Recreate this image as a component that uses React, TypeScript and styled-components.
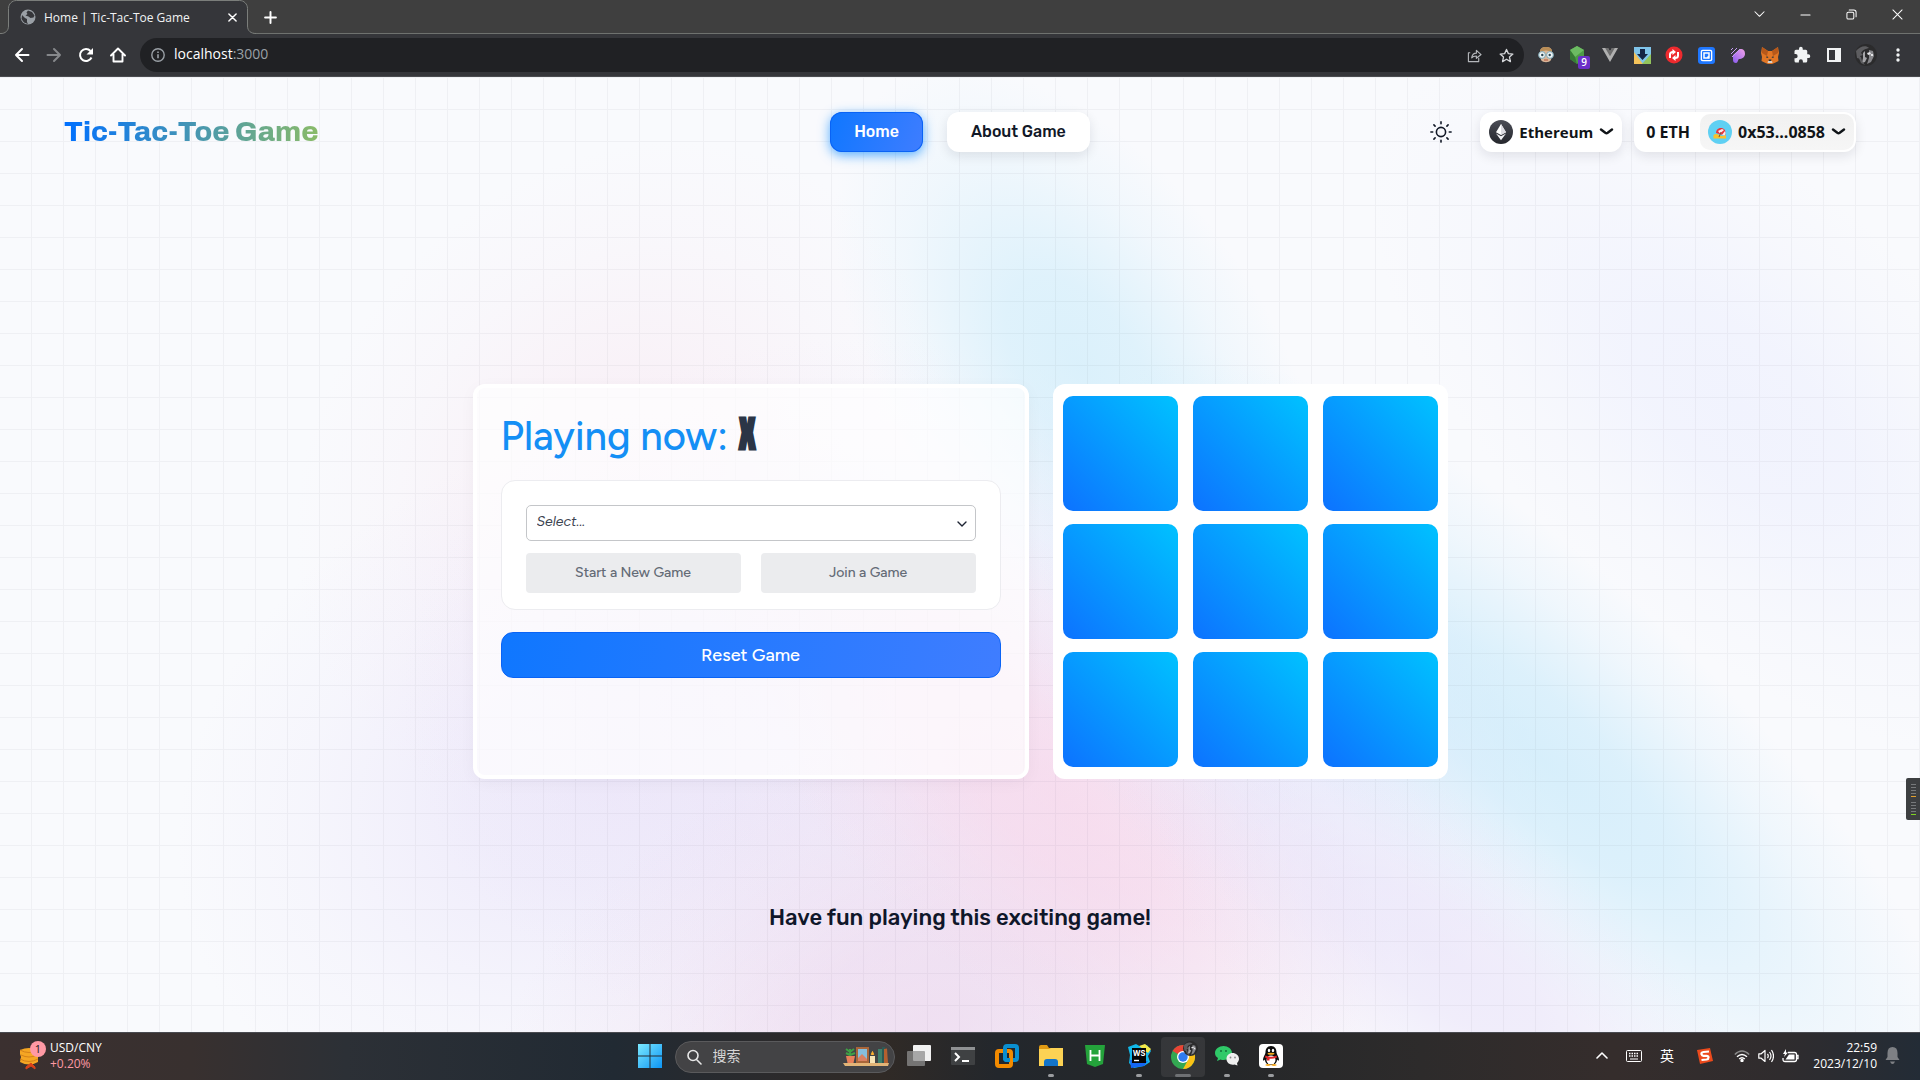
import React from 'react';
import styled, { createGlobalStyle, css } from 'styled-components';

const ui = '"Segoe UI", "Open Sans", "Noto Sans", "Noto Sans CJK SC", sans-serif';
const rubik = 'Rubik, Roboto, "Liberation Sans", sans-serif';
const rounded = 'Figtree, Lato, "Liberation Sans", sans-serif';

const GlobalStyle = createGlobalStyle`
  *, *::before, *::after { box-sizing: border-box; }
  body { margin: 0; font-family: ${rubik}; color: #0f172a; }
  button, select, input { font: inherit; color: inherit; }
  button { border: 0; padding: 0; background: none; cursor: pointer; }
  svg { display: block; flex: none; }
`;

const Screen = styled.div`
  display: flex;
  flex-direction: column;
  min-height: 100vh;
`;

/* ---------- browser chrome ---------- */

const TabStrip = styled.div`
  display: flex;
  height: 34px;
  background: #3f3f3f;
  box-shadow: inset 0 -1px 0 #6f726f;
  font-family: ${ui};
`;

const Tab = styled.div`
  position: relative;
  display: flex;
  align-items: center;
  gap: 8px;
  width: 256px;
  padding: 0 17px 0 20px;
  color: #f1f3f4;
  font-size: 12px;
`;

const TabShape = styled.svg`
  position: absolute;
  left: 0;
  top: 0;
`;

const TabTitle = styled.span`
  position: relative;
  flex: 1;
  white-space: nowrap;
`;

const TabIcon = styled.span`
  position: relative;
  display: flex;
`;

const TabClose = styled.button`
  position: relative;
  display: grid;
  place-items: center;
  width: 14px;
  height: 16px;
`;

const NewTab = styled.button`
  display: grid;
  place-items: center;
  width: 28px;
  margin-right: auto;
`;

const WindowButton = styled.button`
  display: grid;
  place-items: center;
  width: 46px;
  height: 28px;
`;

const Toolbar = styled.div`
  display: flex;
  align-items: center;
  height: 43px;
  padding: 0 6px;
  background: #35363a;
  border-bottom: 1px solid #4a4b4f;
  font-family: ${ui};
`;

const ToolSlot = styled.button`
  position: relative;
  display: grid;
  place-items: center;
  width: 32px;
  height: 32px;
`;

const Omnibox = styled.div`
  display: flex;
  align-items: center;
  flex: 1;
  height: 34px;
  margin: 0 6px;
  padding: 0 2px 0 11px;
  border-radius: 17px;
  background: #202124;
`;

const Address = styled.div`
  flex: 1;
  margin-left: 9px;
  color: #9aa0a6;
  font-size: 14px;
  line-height: 20px;
  padding-bottom: 2px;
  b { color: #fff; font-weight: 400; }
`;

const CountBadge = styled.span`
  position: absolute;
  left: 16px;
  top: 17px;
  width: 12px;
  height: 13px;
  border-radius: 2px;
  background: #6b2fc9;
  color: #fff;
  font-size: 10px;
  font-weight: 600;
  line-height: 13px;
  text-align: center;
`;

/* ---------- page ---------- */

const Page = styled.div`
  position: relative;
  display: flex;
  flex-direction: column;
  flex: 1;
  overflow: hidden;
  background: #f9fafd;
`;

const Backdrop = styled.svg`
  position: absolute;
  inset: 0;
  width: 100%;
  height: 100%;
`;

const Header = styled.header`
  position: relative;
  display: grid;
  grid-template-columns: 1fr auto 1fr;
  align-items: center;
  padding: 35px 64px;
`;

const Brand = styled.a`
  justify-self: start;
  background: linear-gradient(90deg, #0070ff, #8abb68);
  background-clip: text;
  -webkit-background-clip: text;
  color: transparent;
  font-family: Archivo, Inter, sans-serif;
  font-size: 28px;
  font-weight: 800;
  line-height: 40px;
  text-decoration: none;
`;

const Nav = styled.nav`
  display: flex;
  gap: 24px;
`;

const NavLink = styled.a<{ $active?: boolean }>`
  height: 40px;
  padding: 0 24px;
  border-radius: 12px;
  font-size: 16px;
  font-weight: 500;
  line-height: 39px;
  text-decoration: none;
  ${({ $active }) =>
    $active
      ? css`
          background: linear-gradient(110deg, #0f77ff, #3f7dff);
          color: #fff;
          box-shadow: inset 0 0 0 1px #0a63f5, 0 3px 12px rgba(14, 140, 255, 0.7);
        `
      : css`
          background: #fff;
          color: #111827;
          box-shadow: 0 4px 12px rgba(15, 23, 42, 0.1);
        `}
`;

const Tools = styled.div`
  display: flex;
  align-items: center;
  justify-self: end;
  gap: 12px;
  font-family: ${ui};
  font-weight: 700;
  color: #101418;
`;

const ThemeToggle = styled.button`
  margin-right: 16px;
`;

const ChainButton = styled.button`
  display: flex;
  align-items: center;
  gap: 6px;
  height: 40px;
  padding: 0 8px 0 9px;
  border-radius: 12px;
  background: #fff;
  box-shadow: 0 4px 12px rgba(15, 23, 42, 0.1);
  font-size: 15px;
`;

const Wallet = styled.div`
  display: flex;
  align-items: center;
  height: 40px;
  padding: 2px 2px 2px 12px;
  border-radius: 12px;
  background: #fff;
  box-shadow: 0 4px 12px rgba(15, 23, 42, 0.1);
  font-size: 16px;
`;

const AccountButton = styled.button`
  display: flex;
  align-items: center;
  gap: 6px;
  height: 36px;
  margin-left: 10px;
  padding: 0 8px;
  border-radius: 10px;
  background: linear-gradient(#f1f1f1, #f6f6f6);
`;

const Stage = styled.main`
  position: relative;
  display: flex;
  flex: 1;
  flex-direction: column;
  align-items: center;
  justify-content: center;
  gap: 124px;
  padding-top: 98px;
`;

const Columns = styled.div`
  display: flex;
  gap: 24px;
`;

const Panel = styled.section`
  width: 556px;
  padding: 24px;
  border: 4px solid #fff;
  border-radius: 12px;
  background: rgba(255, 255, 255, 0.7);
  box-shadow: 0 4px 16px rgba(15, 23, 42, 0.04);
  font-family: ${rounded};
`;

const Turn = styled.h1`
  display: flex;
  align-items: baseline;
  gap: 10px;
  height: 44px;
  margin: 0 0 24px;
  color: #148ff5;
  font-size: 40px;
  font-weight: 500;
  line-height: 44px;
`;

const Mark = styled.span`
  color: #2b3546;
  font-family: Anton, "Liberation Sans Narrow", "Open Sans", sans-serif;
  font-size: 38px;
  font-weight: 700;
`;

const Setup = styled.div`
  display: grid;
  grid-template-columns: 1fr 1fr;
  gap: 12px 20px;
  padding: 24px 24px 16px;
  border: 1px solid #ececf0;
  border-radius: 14px;
  background: #fff;
`;

const Field = styled.label`
  display: grid;
  grid-column: 1 / -1;
  align-items: center;
  > * { grid-area: 1 / 1; }
  svg { justify-self: end; margin: 4px 9px 0 0; pointer-events: none; }
`;

const Picker = styled.select`
  appearance: none;
  width: 100%;
  height: 36px;
  padding: 0 12px 4px 10px;
  border: 1px solid #c4c6c9;
  border-radius: 5px;
  background: #fff;
  color: #3c4350;
  font-size: 14px;
  font-style: italic;
`;

const SoftButton = styled.button`
  height: 40px;
  padding-bottom: 2px;
  border-radius: 4px;
  background: #ebecee;
  color: #646b76;
  font-size: 14px;
  font-weight: 500;
`;

const ResetButton = styled.button`
  width: 100%;
  height: 46px;
  margin-top: 22px;
  border: 1px solid #0a63f5;
  border-radius: 12px;
  background: linear-gradient(100deg, #0f77ff, #3f7dff);
  color: #fff;
  font-size: 18px;
  font-weight: 500;
`;

const Board = styled.section`
  display: grid;
  grid-template-columns: repeat(3, 115px);
  grid-auto-rows: 115px;
  gap: 13px 15px;
  padding: 12px 10px;
  border-radius: 12px;
  background: #fff;
`;

const Cell = styled.button`
  border-radius: 10px;
  background: linear-gradient(45deg, #0d72ff, #00c2ff);
`;

const Tagline = styled.p`
  margin: 0;
  font-size: 22px;
  font-weight: 500;
  line-height: 30px;
`;

const SideMeter = styled.div`
  position: absolute;
  right: 0;
  top: 701px;
  display: grid;
  place-items: center;
  width: 14px;
  height: 42px;
  border-radius: 2px 0 0 2px;
  background: #3d3f41;
`;

/* ---------- taskbar ---------- */

const Taskbar = styled.footer`
  display: grid;
  grid-template-columns: 1fr auto 1fr;
  align-items: center;
  height: 48px;
  border-top: 1px solid #494a50;
  background: linear-gradient(90deg, #3b3030, #38302f 10%, #2c3036 18%, #212a33 32%, #2b2a2c 40%, #302a26 46%, #23272c 52%, #252729 64%, #2d2b2b 74%, #352d2c 84%, #2f2c2e 93%, #232c36);
  color: #fff;
  font-family: ${ui};
  font-size: 12px;
  line-height: 16px;
`;

const Ticker = styled.button`
  display: flex;
  align-items: center;
  justify-self: start;
  gap: 4px;
  margin-left: 18px;
  padding-bottom: 2px;
  text-align: left;
`;

const Loss = styled.span`
  display: block;
  color: #ff99a4;
`;

const Dock = styled.div`
  display: flex;
  align-items: center;
`;

const DockItem = styled.button<{ $state?: 'running' | 'active' }>`
  position: relative;
  display: grid;
  place-items: center;
  width: 44px;
  height: 40px;
  padding-bottom: 2px;
  border-radius: 4px;
  ${({ $state }) =>
    $state &&
    css`
      ${$state === 'active' && 'background: rgba(255, 255, 255, 0.08);'}
      &::after {
        content: '';
        position: absolute;
        bottom: 0;
        width: ${$state === 'active' ? 16 : 6}px;
        height: 3px;
        border-radius: 2px;
        background: ${$state === 'active' ? '#6f7174' : '#9a9c9f'};
      }
    `}
`;

const Search = styled.label`
  display: flex;
  align-items: center;
  gap: 10px;
  width: 220px;
  height: 32px;
  margin: 0 2px 0 3px;
  padding: 0 5px 0 11px;
  border: 1px solid #5a5a5c;
  border-radius: 16px;
  background: #434345;
`;

const SearchInput = styled.input`
  flex: 1;
  min-width: 0;
  border: 0;
  padding: 0 0 2px;
  background: none;
  outline: 0;
  font-size: 14px;
  &::placeholder { color: #d6d6d6; opacity: 1; }
`;

const Tray = styled.div`
  display: flex;
  align-items: center;
  justify-self: end;
  margin-right: 20px;
  padding-bottom: 2px;
`;

const TraySlot = styled.button<{ $w?: number }>`
  display: grid;
  place-items: center;
  width: ${({ $w = 32 }) => $w}px;
  height: 32px;
  font-size: 14px;
`;

const Clock = styled.div`
  display: flex;
  flex-direction: column;
  align-items: flex-end;
  width: 66px;
  margin: 0 8px 0 5px;
  white-space: nowrap;
`;

/* ---------- drawings ---------- */

const Line = ({ d, size = 16, color = '#fff', w = 2, box = 16 }: { d: string; size?: number; color?: string; w?: number; box?: number }) => (
  <svg width={size} height={size} viewBox={`0 0 ${box} ${box}`} fill="none" stroke={color} strokeWidth={w} strokeLinecap="round" strokeLinejoin="round">
    <path d={d} />
  </svg>
);

const Chevron = () => (
  <svg width="15" height="8" viewBox="0 0 15 8" fill="none" stroke="#101418" strokeWidth="2.4" strokeLinecap="round" strokeLinejoin="round">
    <path d="M2 1.500L6.300 4.800Q7.500 5.600 8.700 4.800L13 1.500" />
  </svg>
);

const Avatar = ({ size }: { size: number }) => (
  <svg width={size} height={size} viewBox="0 0 22 22">
    <circle cx="11" cy="11" r="11" fill="#2b2b2c" />
    <path d="M1 7c4-5 10-6 13-3-3 1-6 1-8 5l2 2-3 1 1 3-4-1z" fill="#5d5d60" />
    <path d="M8 9l2-2v6l2 1-2 4-3 1 1-5z" fill="#a5a5a8" />
    <path d="M14 6l4 1 1 5-3 6-4 2 2-6z" fill="#86868a" />
    <path d="M12 9l3-1 1 2-3 1zM16 10h2v2h-2z" fill="#e4e4e6" />
    <path d="M3 12l3 1 1 4 3 4-4-2z" fill="#5d5d60" />
  </svg>
);

const extensions = [
  {
    name: 'Disguise',
    art: (
      <svg width="18" height="18" viewBox="0 0 18 18">
        <path d="M3 6C3 2 6 1 9 1s6 1 6 5l-1 8c-2 3-8 3-10 0z" fill="#d9b597" />
        <path d="M3 6C3 2 6 1 9 1s6 1 6 5c-4-2-8-2-12 0z" fill="#b98d56" />
        <circle cx="5" cy="9" r="3.4" fill="#eef4f6" stroke="#7ca6b3" />
        <circle cx="13" cy="9" r="3.4" fill="#eef4f6" stroke="#7ca6b3" />
        <circle cx="5.300" cy="9" r="1.200" fill="#2a4550" />
        <circle cx="12.700" cy="9" r="1.200" fill="#2a4550" />
        <path d="M7 14h4" stroke="#b5543c" />
      </svg>
    ),
  },
  {
    name: 'Node tools',
    badge: '9',
    art: (
      <svg width="18" height="20" viewBox="0 0 18 20">
        <path d="M8 1l7 4v9l-7 5-7-5V5z" fill="#4d9b47" />
        <path d="M8 1l7 4-9 7-5-7z" fill="#6cbb62" />
        <path d="M1 5l5 7 2 7-7-5z" fill="#377a35" />
      </svg>
    ),
  },
  {
    name: 'Vue devtools',
    art: (
      <svg width="16" height="14" viewBox="0 0 16 14">
        <path d="M0 0h6l2 3.500L10 0h6L8 14z" fill="#b0b0b0" />
        <path d="M3.200 0H6l2 3.500L10 0h2.800L8 8.300z" fill="#6e6e6e" />
      </svg>
    ),
  },
  {
    name: 'Downloader',
    art: (
      <svg width="17" height="17" viewBox="0 0 17 17">
        <path d="M0 0h17v17H0z" fill="#7fc4ea" />
        <path d="M0 5l9 12H0z" fill="#f4c35a" />
        <path d="M17 7v10H8z" fill="#93c45c" />
        <path d="M6 2h5v5h3l-5.500 6L3 7h3z" fill="#142446" />
      </svg>
    ),
  },
  {
    name: 'Sync',
    art: (
      <svg width="18" height="18" viewBox="0 0 18 18">
        <circle cx="9" cy="9" r="8.500" fill="#ee2a2e" />
        <path d="M5 12V8.500Q5 6 8 6M13 6v3.500Q13 12 10 12" fill="none" stroke="#fff" strokeWidth="2" />
        <path d="M7.500 3l3.500 3-3.500 3zM10.500 9v6L7 12z" fill="#fff" />
      </svg>
    ),
  },
  {
    name: 'Quick search',
    art: (
      <svg width="17" height="17" viewBox="0 0 17 17">
        <rect width="17" height="17" rx="3" fill="#1f77ff" />
        <rect x="2.700" y="2.700" width="11.600" height="11.600" rx="2" fill="#fff" />
        <rect x="4" y="4" width="9" height="9" rx="1" fill="#1f77ff" />
        <path d="M6 6h5v5H6zM9.500 9.500l2 2" fill="none" stroke="#fff" strokeWidth="1.500" />
      </svg>
    ),
  },
  {
    name: 'Phantom view',
    art: (
      <svg width="16" height="17" viewBox="0 0 16 17">
        <defs>
          <linearGradient id="pv" x1="0" y1="1" x2="1" y2="0">
            <stop offset="0" stopColor="#8a5cf0" />
            <stop offset="1" stopColor="#f2a3e8" />
          </linearGradient>
        </defs>
        <path d="M3 8l7-6c4 0 5 2 5 5s-3 5-6 5c-1 0-1 4-3 4s-3-1-3-3z" fill="url(#pv)" />
        <path d="M1 3l2-2M1 7l6-6M2 10l8-8" stroke="#c69cf2" />
      </svg>
    ),
  },
  {
    name: 'MetaMask',
    art: (
      <svg width="18" height="17" viewBox="0 0 18 17">
        <path d="M1 0l6 4h4l6-4 1 6-1 4 .5 4-4 2-2.500 1H7l-2.500-1-4-2 .5-4-1-4z" fill="#e27625" />
        <path d="M1 0l6 4-1 5-5-3zM17 0l-6 4 1 5 5-3z" fill="#b7581a" />
        <path d="M6 9l1.500 2L5 10.500zM12 9l-1.500 2 2.500-.5z" fill="#22333f" />
        <path d="M7 14h4l.5 2h-5z" fill="#d9cfc6" />
        <path d="M7.500 12.500h3L10 14H8z" fill="#22333f" />
      </svg>
    ),
  },
  {
    name: 'Extensions',
    art: (
      <svg width="18" height="18" viewBox="0 0 24 24" fill="#f1f3f4">
        <path d="M20.500 11H19V7a2 2 0 0 0-2-2h-4V3.500a2.500 2.500 0 0 0-5 0V5H4a2 2 0 0 0-2 2v3.800h1.500a2.700 2.700 0 0 1 0 5.400H2V20a2 2 0 0 0 2 2h3.800v-1.500a2.700 2.700 0 0 1 5.400 0V22H17a2 2 0 0 0 2-2v-4h1.500a2.500 2.500 0 0 0 0-5z" />
      </svg>
    ),
  },
  {
    name: 'Side panel',
    art: (
      <svg width="14" height="14" viewBox="0 0 14 14">
        <rect x="1" y="1" width="12" height="12" fill="none" stroke="#f1f3f4" strokeWidth="2" />
        <rect x="8" y="1" width="5" height="12" fill="#f1f3f4" />
      </svg>
    ),
  },
  { name: 'Profile', art: <Avatar size={22} /> },
  {
    name: 'Menu',
    art: (
      <svg width="4" height="14" viewBox="0 0 4 14" fill="#f1f3f4">
        <circle cx="2" cy="2" r="1.700" /><circle cx="2" cy="7" r="1.700" /><circle cx="2" cy="12" r="1.700" />
      </svg>
    ),
  },
];

const Glow = () => {
  const blobs: [number, number, number, number, number, string, number][] = [
    [1740, 330, 460, 220, 42, '#e9ecfe', 0.5],
    [620, 400, 360, 300, -50, '#f8e6f0', 0.5],
    [600, 700, 440, 340, -25, '#e3dbf8', 0.5],
    [860, 620, 460, 360, 0, '#e8dcf5', 0.45],
    [930, 950, 460, 300, -20, '#e6c6e6', 0.5],
    [1060, 720, 430, 200, 42, '#f8d4e9', 0.65],
    [1260, 600, 360, 200, 45, '#dcdffa', 0.55],
    [1080, 290, 340, 190, 56, '#c6eafa', 0.6],
    [1540, 680, 560, 180, 43, '#c0e7fa', 0.6],
    [1440, 880, 400, 150, 35, '#e6def8', 0.55],
  ];
  return (
    <Backdrop viewBox="0 0 1920 955" preserveAspectRatio="none" aria-hidden="true">
      <defs>
        {blobs.map((b, i) => (
          <radialGradient id={`glow${i}`} key={i}>
            <stop offset="0" stopColor={b[5]} stopOpacity={b[6]} />
            <stop offset="0.3" stopColor={b[5]} stopOpacity={b[6] * 0.85} />
            <stop offset="0.7" stopColor={b[5]} stopOpacity={b[6] * 0.28} />
            <stop offset="1" stopColor={b[5]} stopOpacity="0" />
          </radialGradient>
        ))}
      </defs>
      {blobs.map((b, i) => (
        <ellipse key={i} cx={b[0]} cy={b[1]} rx={b[2]} ry={b[3]} transform={`rotate(${b[4]} ${b[0]} ${b[1]})`} fill={`url(#glow${i})`} />
      ))}
    </Backdrop>
  );
};

const GridLines = () => (
  <Backdrop aria-hidden="true">
    <defs>
      <pattern id="grid" width="32" height="32" patternUnits="userSpaceOnUse">
        <path d="M0 .5H31.5V32" fill="none" stroke="rgba(15,23,42,0.045)" />
      </pattern>
    </defs>
    <rect width="100%" height="100%" fill="url(#grid)" />
  </Backdrop>
);

const dock: { name: string; state?: 'running' | 'active'; art: React.ReactNode }[] = [
  {
    name: 'Task view',
    art: (
      <svg width="24" height="22" viewBox="0 0 24 22">
        <rect x="6" y="0" width="18" height="16" rx="1" fill="#f1f1f1" />
        <rect x="0" y="6" width="18" height="15" rx="1" fill="#8d8d8d" fillOpacity="0.75" />
      </svg>
    ),
  },
  {
    name: 'Terminal',
    art: (
      <svg width="24" height="18" viewBox="0 0 24 18">
        <rect width="24" height="18" rx="1" fill="#3f4143" />
        <path d="M0 0h24v3H0z" fill="#8f9193" />
        <path d="M4 6l4 4-4 4M11 14h7" fill="none" stroke="#fff" strokeWidth="2" />
      </svg>
    ),
  },
  {
    name: 'VMware',
    art: (
      <svg width="24" height="24" viewBox="0 0 24 24" fill="none" strokeWidth="4">
        <rect x="10" y="2" width="12" height="14" rx="2" stroke="#0a8fd0" />
        <rect x="2" y="7" width="14" height="15" rx="2" stroke="#f38b00" />
        <path d="M10 5v9q0 2 2 2h3" stroke="#0a8fd0" />
      </svg>
    ),
  },
  {
    name: 'File Explorer',
    state: 'running',
    art: (
      <svg width="24" height="22" viewBox="0 0 24 22">
        <path d="M0 2q0-2 2-2h6l2 3h12v5H0z" fill="#e09a13" />
        <path d="M0 4h10l2-1h12v18H0z" fill="#fcd254" />
        <path d="M5 21v-4q0-3 3-3h8q3 0 3 3v4z" fill="#1374c9" />
      </svg>
    ),
  },
  {
    name: 'HBuilder',
    art: (
      <svg width="20" height="22" viewBox="0 0 20 22">
        <path d="M0 0h20l-2 19-8 3-8-3z" fill="#24a33b" />
        <path d="M5.500 5v11M14.500 5v11M5.500 10.500h9" stroke="#fff" strokeWidth="1.800" />
      </svg>
    ),
  },
  {
    name: 'WebStorm',
    state: 'running',
    art: (
      <svg width="24" height="24" viewBox="0 0 24 24">
        <path d="M1 3l8-3 5 3 6-2 4 6-3 5 2 6-6 4-10 2-5-5 1-8z" fill="#12b7e8" />
        <path d="M12 2l6-2 6 5-3 4z" fill="#f3e94a" />
        <path d="M3 16l1 8 13-2 4-5z" fill="#1466f5" />
        <rect x="5" y="4" width="14" height="15" fill="#050505" />
        <path d="M7 16.500h5" stroke="#fff" strokeWidth="1.400" />
        <text x="12" y="11.500" fill="#fff" fontSize="7.500" fontWeight="700" fontFamily="Inter, sans-serif" textAnchor="middle">WS</text>
      </svg>
    ),
  },
  {
    name: 'Chrome',
    state: 'active',
    art: (
      <svg width="30" height="30" viewBox="0 0 30 30">
        <circle cx="15" cy="16" r="12" fill="#33a852" />
        <path d="M15 16L4.600 10A12 12 0 0 1 25.400 10z" fill="#ea4335" />
        <path d="M15 16L25.400 10A12 12 0 0 1 15 28L20 19z" fill="#fbc116" />
        <circle cx="15" cy="16" r="6" fill="#fff" />
        <circle cx="15" cy="16" r="4.700" fill="#2f7bf0" />
        <svg x="15" y="0" width="15" height="15"><Avatar size={15} /></svg>
      </svg>
    ),
  },
  {
    name: 'WeChat',
    state: 'running',
    art: (
      <svg width="24" height="20" viewBox="0 0 24 20">
        <path d="M8.500 0C13 0 17 3 17 7s-4 7-8.500 7c-1 0-2 0-3-.5L2 15l1-3C1 11 0 9 0 7c0-4 4-7 8.500-7z" fill="#2fc968" />
        <path d="M17.500 7c3.500 0 6.500 2.500 6.500 6 0 1.500-1 3-2 4l.5 2.500-3-1c-4 1-8-1.500-8-5.500 0-3.500 2.500-6 6-6z" fill="#efefef" />
        <circle cx="6" cy="5" r="1" fill="#14713a" /><circle cx="11" cy="5" r="1" fill="#14713a" />
        <circle cx="15.500" cy="11.500" r=".9" fill="#8a8a8a" /><circle cx="20" cy="11.500" r=".9" fill="#8a8a8a" />
      </svg>
    ),
  },
  {
    name: 'QQ',
    state: 'running',
    art: (
      <svg width="24" height="24" viewBox="0 0 24 24">
        <rect width="24" height="24" rx="4" fill="#fff" />
        <path d="M12 2c4 0 5.500 3 5.500 6.500 0 2 2.500 4.500 2.500 7 0 1.500-1 1.500-2 0 0 4-3 5.500-6 5.500s-6-1.500-6-5.500c-1 1.500-2 1.500-2 0 0-2.500 2.500-5 2.500-7C6.500 5 8 2 12 2z" fill="#0b0b0b" />
        <ellipse cx="12" cy="16" rx="4.500" ry="4.500" fill="#fff" />
        <ellipse cx="10" cy="6.500" rx="1.200" ry="1.800" fill="#fff" /><ellipse cx="14" cy="6.500" rx="1.200" ry="1.800" fill="#fff" />
        <path d="M6.500 11.500q5.500 2.500 11 0l.5 2q-6 2.500-12 0zM8 13h2.500v3.500H8z" fill="#e3262a" />
        <ellipse cx="12" cy="9.700" rx="3.500" ry="1" fill="#f6a81c" />
        <path d="M6 21q3-2 6 0-3 2-6 0zM12 21q3-2 6 0-3 2-6 0z" fill="#f6a81c" />
      </svg>
    ),
  },
];

export default function App() {
  return (
    <Screen>
      <GlobalStyle />
      <TabStrip>
        <Tab>
          <TabShape width="256" height="34" viewBox="0 0 256 34">
            <path d="M0 33.500H1C5 33.500 8.500 31 8.500 26V8.500C8.500 4 12 .5 16.500 .5H239.500C244 .5 247.500 4 247.500 8.500V26C247.500 31 251 33.500 256 33.500V34H0z" fill="#35363a" />
            <path d="M0 33.500H1C5 33.500 8.500 31 8.500 26V8.500C8.500 4 12 .5 16.500 .5H239.500C244 .5 247.500 4 247.500 8.500V26C247.500 31 251 33.500 256 33.500" fill="none" stroke="#7b7e7b" />
          </TabShape>
          <TabIcon>
            <svg width="16" height="16" viewBox="0 0 16 16">
              <circle cx="8" cy="8" r="7.500" fill="#9aa0a6" />
              <path d="M2 6l3 3 2 1v3l1 2-4-1.500L1.500 10zM8 1.500l-1.500 2 1 1.500-2 1.500 3 1 2 1.500 3-.5 1-2L12 3z" fill="#35363a" />
            </svg>
          </TabIcon>
          <TabTitle>Home | Tic-Tac-Toe Game</TabTitle>
          <TabClose aria-label="Close tab"><Line d="M1 1l8 8M9 1l-8 8" size={9} box={10} w={1.6} /></TabClose>
        </Tab>
        <NewTab aria-label="New tab"><Line d="M6 1v10M1 6h10" size={13} box={12} w={1.8} /></NewTab>
        <WindowButton aria-label="Search tabs"><Line d="M1 3l5 5 5-5" size={11} box={12} w={1.1} /></WindowButton>
        <WindowButton aria-label="Minimize"><Line d="M1 6.500h10" size={11} box={12} w={1.1} /></WindowButton>
        <WindowButton aria-label="Restore"><Line d="M1 5q0-1.500 1.500-1.500h4.500Q8.500 3.500 8.500 5v4.500q0 1.500-1.500 1.500H2.500Q1 11 1 9.500zM3.500 1h5Q11 1 11 3.500v5" size={11} box={12} w={1.1} /></WindowButton>
        <WindowButton aria-label="Close"><Line d="M1 1l10 10M11 1L1 11" size={11} box={12} w={1.1} /></WindowButton>
      </TabStrip>
      <Toolbar>
        <ToolSlot aria-label="Back"><Line d="M14.500 8H2M8 2L2 8l6 6" w={2} /></ToolSlot>
        <ToolSlot aria-label="Forward"><Line d="M1.500 8H14M8 2l6 6-6 6" color="#86888b" w={2} /></ToolSlot>
        <ToolSlot aria-label="Reload">
          <svg width="16" height="16" viewBox="0 0 16 16" fill="none" stroke="#fff" strokeWidth="2">
            <path d="M13.500 10.500A6 6 0 1 1 12.500 4" /><path d="M15 1v6.500H8.500z" fill="#fff" stroke="none" />
          </svg>
        </ToolSlot>
        <ToolSlot aria-label="Home"><Line d="M1 8.500L8 1.500l7 7M3.500 7v7.500h9V7" w={1.9} /></ToolSlot>
        <Omnibox>
          <svg width="14" height="14" viewBox="0 0 14 14" fill="none" stroke="#9aa0a6" strokeWidth="1.400"><circle cx="7" cy="7" r="6.200" /><path d="M7 6.200v4M7 3.500v1.500" strokeWidth="1.600" /></svg>
          <Address><b>localhost</b>:3000</Address>
          <ToolSlot aria-label="Share"><Line d="M3 5H1.500v9.500h11V11M5 10.500C5.500 7 8 5.500 10 5.500V2.500L15 7l-5 4V8.500C8 8.500 6 9 5 10.500z" color="#b4b7bb" w={1.2} size={15} /></ToolSlot>
          <ToolSlot aria-label="Bookmark"><Line d="M8 1.500l2 4.500 4.800.5-3.600 3.200 1 4.800L8 12l-4.200 2.500 1-4.800L1.200 6.500 6 6z" color="#d5d7da" w={1.4} size={15} /></ToolSlot>
        </Omnibox>
        {extensions.map((e) => (
          <ToolSlot key={e.name} aria-label={e.name}>
            {e.art}
            {e.badge && <CountBadge>{e.badge}</CountBadge>}
          </ToolSlot>
        ))}
      </Toolbar>

      <Page>
        <Glow />
        <GridLines />
        <Header>
          <Brand href="#">Tic-Tac-Toe Game</Brand>
          <Nav>
            <NavLink href="#" $active>Home</NavLink>
            <NavLink href="#about">About Game</NavLink>
          </Nav>
          <Tools>
            <ThemeToggle aria-label="Toggle theme">
              <svg width="22" height="22" viewBox="0 0 22 22" fill="none" stroke="#111827" strokeWidth="1.600" strokeLinecap="round">
                <circle cx="11" cy="11" r="4.600" />
                <path d="M11 .9v1.800M11 19.300v1.800M.9 11h1.800M19.300 11h1.800M3.900 3.900l1.200 1.200M16.900 16.900l1.200 1.200M3.900 18.100l1.200-1.200M16.900 5.100l1.200-1.200" />
              </svg>
            </ThemeToggle>
            <ChainButton>
              <svg width="24" height="24" viewBox="0 0 24 24">
                <defs><linearGradient id="eth" x1="0" y1="0" x2="0" y2="1"><stop stopColor="#4b4d56" /><stop offset="1" stopColor="#25272d" /></linearGradient></defs>
                <circle cx="12" cy="12" r="12" fill="url(#eth)" />
                <path d="M12 4l5 8.200-5 2.900-5-2.900z" fill="#fff" /><path d="M12 4l5 8.200-5 2.900z" fill="#dcdce2" />
                <path d="M7 13.400l5 2.900 5-2.900-5 6.800z" fill="#f2f2f5" />
              </svg>
              <span>Ethereum</span>
              <Chevron />
            </ChainButton>
            <Wallet>
              <span>0 ETH</span>
              <AccountButton>
                <svg width="24" height="24" viewBox="0 0 24 24">
                  <circle cx="12" cy="12" r="12" fill="#5fd0f3" />
                  <path d="M5.500 15q3-2 6 .5 3 1 6.500-.5v3.500H5.500z" fill="#f9c22b" />
                  <path d="M8 13c0-4 4-6 7-4.500 2.500 1 3 4 2 7z" fill="#e8353c" />
                  <path d="M10 11l4-2 2 1-4 3.500zM14 15l3-4 .6 2-.8 2.500z" fill="#fbe9e9" />
                  <path d="M13 12l-2 5" stroke="#8a4b2a" />
                </svg>
                <span>0x53...0858</span>
                <Chevron />
              </AccountButton>
            </Wallet>
          </Tools>
        </Header>
        <Stage>
          <Columns>
            <Panel>
              <Turn>Playing now: <Mark>X</Mark></Turn>
              <Setup>
                <Field>
                  <Picker aria-label="Choose a game"><option>Select...</option></Picker>
                  <Line d="M1 2l4 4 4-4" size={10} box={10} color="#1e2433" w={1.4} />
                </Field>
                <SoftButton>Start a New Game</SoftButton>
                <SoftButton>Join a Game</SoftButton>
              </Setup>
              <ResetButton>Reset Game</ResetButton>
            </Panel>
            <Board aria-label="Board">
              {Array.from({ length: 9 }, (_, i) => <Cell key={i} aria-label={`Square ${i + 1}`} />)}
            </Board>
          </Columns>
          <Tagline>Have fun playing this exciting game!</Tagline>
        </Stage>
        <SideMeter>
          <svg width="5" height="34" viewBox="0 0 5 34">
            <path d="M0 2.500h5M0 5.500h5M0 8.500h5M0 11.500h5M0 20.500h5M0 23.500h5M0 26.500h5M0 29.500h5" stroke="#77797b" />
            <path d="M0 14.500h5" stroke="#e3a02c" /><path d="M0 32.500h5" stroke="#7ed321" />
          </svg>
        </SideMeter>
      </Page>

      <Taskbar>
        <Ticker>
          <svg width="28" height="32" viewBox="0 0 28 32">
            <path d="M2 10q9-4 18 0v12q-9 5-18 0l1-5-1-3z" fill="#f5a623" />
            <path d="M2 10q9 5 18 0M3 15q8 4 16 0M2 19q9 5 18 0" stroke="#d4811a" fill="none" />
            <path d="M8 29v-2l5-4 4 4v2l-4-3z" fill="#d8431a" stroke="#d8431a" />
            <circle cx="20" cy="9" r="8" fill="#ff99a4" />
            <text x="20" y="13" textAnchor="middle" fontSize="11" fill="#1b1b1b">1</text>
          </svg>
          <span>USD/CNY<Loss>+0.20%</Loss></span>
        </Ticker>
        <Dock>
          <DockItem aria-label="Start">
            <svg width="24" height="24" viewBox="0 0 24 24">
              <defs><linearGradient id="win" x1="0" y1="0" x2="1" y2="1"><stop stopColor="#7be9ff" /><stop offset="1" stopColor="#0d95f5" /></linearGradient></defs>
              <path d="M0 0h11.500v11.500H0zM12.500 0H24v11.500H12.500zM0 12.500h11.500V24H0zM12.500 12.500H24V24H12.500z" fill="url(#win)" />
            </svg>
          </DockItem>
          <Search>
            <Line d="M11 6.500a5 5 0 1 1-10 0a5 5 0 1 1 10 0M10 11l4 4" size={16} w={1.6} color="#e8e8e8" />
            <SearchInput placeholder="搜索" aria-label="搜索" />
            <svg width="46" height="22" viewBox="0 0 46 22">
              <path d="M0 17h46l-1 3H2z" fill="#e2b477" />
              <path d="M3 10h9l-1.500 7H4.500z" fill="#e8805a" />
              <path d="M7 10V3M7 6L3 3M7 6l4-3M7 9L3 7M7 9l5-2" stroke="#3fa046" strokeWidth="2" />
              <rect x="14" y="2" width="11" height="14" fill="#86bedd" stroke="#a9663a" strokeWidth="2" />
              <path d="M15 12l4-4 5 5v2h-9z" fill="#d98163" />
              <rect x="27" y="10" width="5" height="7" fill="#f7e3b5" /><path d="M29.500 5.500l1.200 3h-2.400z" fill="#ffb02e" stroke="#ffb02e" />
              <path d="M35 3h4v14h-4z" fill="#3e7f6a" /><path d="M39 1h3v16h-3z" fill="#2c5a55" /><path d="M41 3l3-.5L45 17h-4z" fill="#b3602f" />
            </svg>
          </Search>
          {dock.map((d) => <DockItem key={d.name} aria-label={d.name} $state={d.state}>{d.art}</DockItem>)}
        </Dock>
        <Tray>
          <TraySlot aria-label="Show hidden icons"><Line d="M1 8l5-5 5 5" size={12} box={12} w={1.6} /></TraySlot>
          <TraySlot aria-label="Keyboard">
            <svg width="16" height="12" viewBox="0 0 16 12" fill="none" stroke="#fff"><rect x=".5" y=".5" width="15" height="11" rx="1" /><path d="M3 3.500h10M3 6h10" strokeDasharray="1.500 1" strokeWidth="1.400" /><path d="M4 9h8" /></svg>
          </TraySlot>
          <TraySlot $w={34}>英</TraySlot>
          <TraySlot $w={42} aria-label="Sogou input">
            <svg width="16" height="16" viewBox="0 0 16 16"><path d="M0 2L13 0l3 13-13 3z" fill="#ec4a1c" /><path d="M12 3.500L6.500 4Q4 4.500 4.500 6.300T7 7.800h2.500q2 0 2 1.600T9.500 11.500L4.500 12" fill="none" stroke="#fff" strokeWidth="2.200" /></svg>
          </TraySlot>
          <TraySlot $w={32} aria-label="Wi-Fi">
            <svg width="16" height="12" viewBox="0 0 16 12" fill="none" stroke="#fff" strokeWidth="1.400"><path d="M.8 4.500Q8-2.500 15.200 4.500" stroke="#8a8a8a" /><path d="M3 6.800Q8 2 13 6.800M5.200 9Q8 6.300 10.800 9" /><circle cx="8" cy="10.500" r="1" fill="#fff" /></svg>
          </TraySlot>
          <TraySlot $w={16} aria-label="Volume">
            <svg width="16" height="14" viewBox="0 0 16 14" fill="none" stroke="#fff" strokeWidth="1.200" strokeLinejoin="round"><path d="M.8 4.800h2.400L7 1.500v11L3.200 9.200H.8zM9.500 4.800q1.500 2.200 0 4.400M11.500 3q3 4 0 8M13.500 1q4 6 0 12" /></svg>
          </TraySlot>
          <TraySlot $w={32} aria-label="Battery">
            <svg width="17" height="14" viewBox="0 0 17 14" fill="none" stroke="#fff" strokeWidth="1.300"><path d="M6 3.500h6.500q2 0 2 2v5q0 2-2 2H3q-2 0-2-2V9M14.500 6.500H16v3h-1.500" /><path d="M7 5.500h5.500v5h-9z" fill="#fff" stroke="none" /><path d="M4 0L1 5h2l-1 3 4-4.500H4z" fill="#fff" stroke="none" /></svg>
          </TraySlot>
          <Clock><span>22:59</span><span>2023/12/10</span></Clock>
          <svg width="15" height="17" viewBox="0 0 15 17" fill="#7e8084"><path d="M7.500 0Q12.500 0 12.500 6v4l2 3H.5l2-3V6Q2.500 0 7.500 0zM5 14.500h5Q9 17 7.500 17T5 14.500z" /></svg>
        </Tray>
      </Taskbar>
    </Screen>
  );
}
